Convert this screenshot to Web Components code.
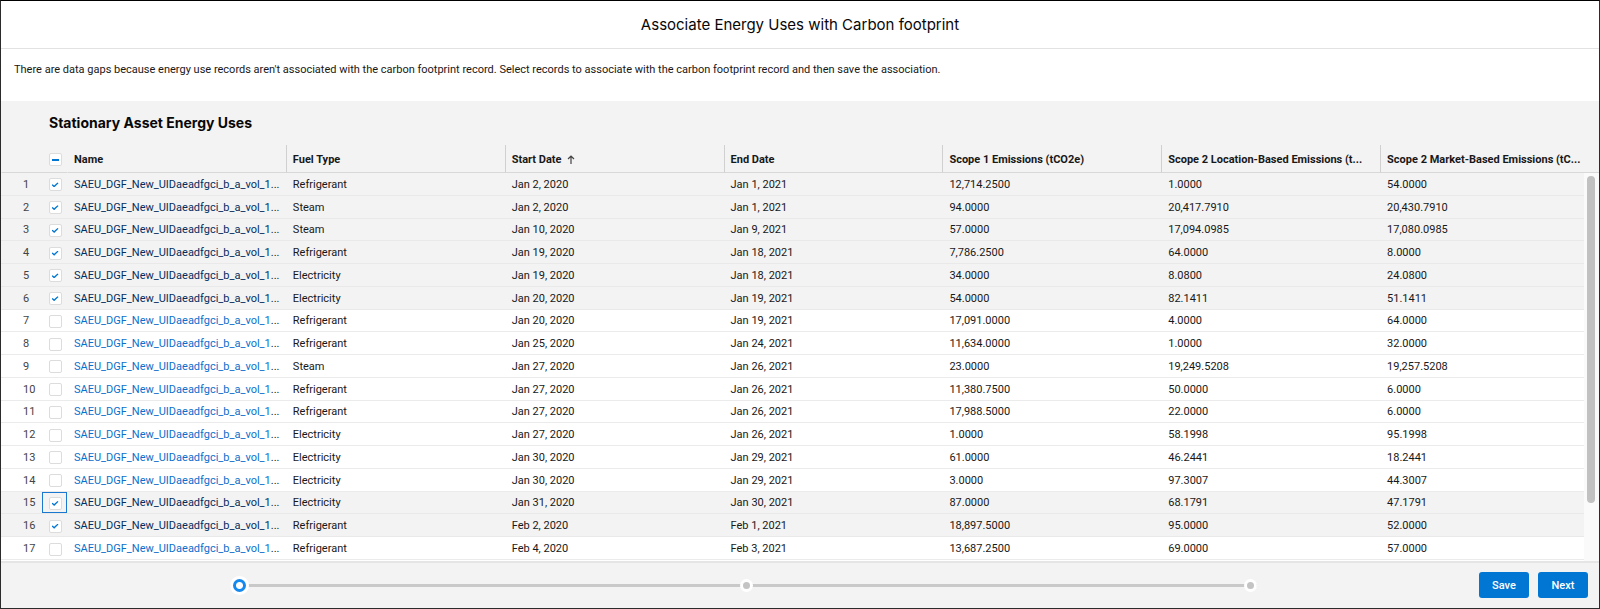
<!DOCTYPE html>
<html lang="en">
<head>
<meta charset="utf-8">
<title>Associate Energy Uses with Carbon footprint</title>
<style>
  html, body { margin: 0; height: 100%; }
  body { font-family: Roboto, "Liberation Sans", sans-serif; font-size: 11px; color: #181818; background: #fff; }
</style>
</head>
<body>
<flow-dialog>
  <span slot="title">Associate Energy Uses with Carbon footprint</span>
  <span slot="intro">There are data gaps because energy use records aren't associated with the carbon footprint record. Select records to associate with the carbon footprint record and then save the association.</span>
  <energy-table>Stationary Asset Energy Uses</energy-table>
  <step-progress slot="progress" steps="3" current="1"></step-progress>
  <brand-button slot="actions">Save</brand-button>
  <brand-button slot="actions">Next</brand-button>
</flow-dialog>

<template id="flow-dialog">
  <style>
    :host { display: flex; flex-direction: column; box-sizing: border-box; min-height: 100vh; border: 1px solid #2b2b2b; border-top-color: #000; }
    header { padding: 12px 16px; border-bottom: 1px solid #e2e2e2; text-align: center; }
    h1 { margin: 0; font-family: Inter, "Liberation Sans", sans-serif; font-size: 15px; line-height: 23px; font-weight: 400; color: #080707; }
    p { margin: 0; padding: 13px 13px 23px; line-height: 16px; }
    main { flex: 1; display: flex; flex-direction: column; }
    footer { display: grid; grid-template-columns: 31fr 139fr 30fr auto; align-items: center; padding: 9px 11px 10px 0; background: #f3f3f3; border-top: 2px solid #e5e5e5; }
    .progress { grid-column: 2; }
    .actions { grid-column: 4; display: flex; gap: 9px; }
  </style>
  <header><h1><slot name="title"></slot></h1></header>
  <p><slot name="intro"></slot></p>
  <main><slot></slot></main>
  <footer>
    <div class="progress"><slot name="progress"></slot></div>
    <div class="actions"><slot name="actions"></slot></div>
  </footer>
</template>

<template id="brand-button">
  <style>
    :host { display: block; }
    button { display: block; width: 50px; height: 26px; padding: 0; border: 0; border-radius: 3px; background: #0176d3; color: #fff; font: 500 11px Roboto, "Liberation Sans", sans-serif; cursor: pointer; }
  </style>
  <button type="button"><slot></slot></button>
</template>

<template id="step-progress">
  <style>
    :host { display: block; }
    ol { display: flex; align-items: center; justify-content: space-between; margin: 0; padding: 0; list-style: none; background: linear-gradient(#c9c9c9, #c9c9c9) center / 100% 3px no-repeat; }
    li { box-sizing: border-box; width: 13px; height: 13px; border: 3px solid #fff; border-radius: 50%; background: #c4c4c4; }
    li.current { width: 19px; height: 19px; background: radial-gradient(circle, #fff 3px, #1589ee 4px); }
  </style>
  <ol></ol>
</template>

<template id="energy-table">
  <style>
    :host { flex: 1; display: flex; flex-direction: column; background: #f3f3f3; }
    h2 { margin: 0; padding: 11px 48px; font-family: Inter, "Liberation Sans", sans-serif; font-size: 14px; line-height: 22px; font-weight: 700; color: #080707; }
    .pane { flex: 1; display: grid; grid-template: 28px 1fr / 1fr; padding-bottom: 1px; background: linear-gradient(#f3f3f3, #f3f3f3) top / 100% 28px no-repeat #fff; }
    table { grid-area: 1 / 1 / 3 / 2; width: 100%; height: 100%; table-layout: fixed; border-collapse: separate; border-spacing: 0; }
    th, td { box-sizing: border-box; height: 22px; padding: 2px 0 0 7px; text-align: left; font-weight: 400; white-space: nowrap; line-height: 16px; border-bottom: 1px solid #ebebeb; }
    thead th { height: 28px; padding-left: 6px; font-weight: 700; border-left: 1px solid #d0d0d0; border-bottom-color: #d8d8d8; }
    thead th:nth-child(-n+3) { border-left-color: transparent; }
    .num { width: 41px; }
    .pick { width: 25px; }
    tbody .num { padding: 2px 0 0 22px; color: #444; }
    .pick, thead .pick { padding: 2px 0 0 1px; text-align: center; border-left: 0; }
    .selected > * { background: #f3f3f3; border-bottom-color: #e9e9e9; }
    a { color: #0b6fcb; text-decoration: none; }
    .selected a { color: #032d60; }
    .focused .pick { box-shadow: inset 0 0 0 1px #1b78d0; }
    input { display: inline-grid; place-items: center; box-sizing: border-box; width: 13px; height: 13px; margin: 0; vertical-align: middle; appearance: none; background: #fff; border: 1px solid #dcdcdc; border-radius: 2px; }
    input:checked::before { content: ""; width: 7px; height: 5px; background: #0176d3; clip-path: polygon(0 52%, 14% 36%, 38% 62%, 86% 0, 100% 16%, 38% 100%); }
    input:indeterminate::before { content: ""; width: 7px; height: 2px; background: #0176d3; }
    svg { width: 8px; height: 9px; margin-left: 5px; vertical-align: -1px; fill: none; stroke: #444; stroke-width: 1.2; }
    .scroll { grid-area: 2 / 1; justify-self: end; z-index: 1; box-sizing: border-box; width: 15px; margin-bottom: -1px; padding: 3px 4px 0 3px; background: #fafafa; }
    .thumb { height: 85%; border-radius: 4px; background: #c1c1c1; }
  </style>
  <h2><slot></slot></h2>
  <div class="pane">
    <table>
      <thead>
        <tr>
          <th class="num" aria-label="Row number"></th>
          <th class="pick"><input type="checkbox" aria-label="Select all rows"></th>
          <th>Name</th>
          <th>Fuel Type</th>
          <th>Start Date<svg viewBox="0 0 8 9" aria-hidden="true"><path d="M4 9V1M1 4l3-3 3 3"/></svg></th>
          <th>End Date</th>
          <th>Scope 1 Emissions (tCO2e)</th>
          <th>Scope 2 Location-Based Emissions (t...</th>
          <th>Scope 2 Market-Based Emissions (tC...</th>
        </tr>
      </thead>
      <tbody></tbody>
    </table>
    <div class="scroll"><div class="thumb"></div></div>
  </div>
</template>

<script>
  class TemplateElement extends HTMLElement {
    constructor() {
      super();
      this.attachShadow({ mode: 'open' }).append(
        document.getElementById(this.localName).content.cloneNode(true));
    }
  }

  customElements.define('flow-dialog', class extends TemplateElement {});
  customElements.define('brand-button', class extends TemplateElement {});

  customElements.define('step-progress', class extends TemplateElement {
    connectedCallback() {
      const current = Number(this.getAttribute('current'));
      const items = Array.from({ length: Number(this.getAttribute('steps')) }, (_, i) => {
        const li = document.createElement('li');
        li.setAttribute('aria-label', `Step ${i + 1}`);
        if (i + 1 === current) li.className = 'current';
        return li;
      });
      this.shadowRoot.querySelector('ol').replaceChildren(...items);
    }
  });

  const NAME = 'SAEU_DGF_New_UIDaeadfgci_b_a_vol_1';
  // fuel, start, end, scope 1, scope 2 location-based, scope 2 market-based
  const ROWS = [
    ['Refrigerant', 'Jan 2, 2020', 'Jan 1, 2021', '12,714.2500', '1.0000', '54.0000'],
    ['Steam', 'Jan 2, 2020', 'Jan 1, 2021', '94.0000', '20,417.7910', '20,430.7910'],
    ['Steam', 'Jan 10, 2020', 'Jan 9, 2021', '57.0000', '17,094.0985', '17,080.0985'],
    ['Refrigerant', 'Jan 19, 2020', 'Jan 18, 2021', '7,786.2500', '64.0000', '8.0000'],
    ['Electricity', 'Jan 19, 2020', 'Jan 18, 2021', '34.0000', '8.0800', '24.0800'],
    ['Electricity', 'Jan 20, 2020', 'Jan 19, 2021', '54.0000', '82.1411', '51.1411'],
    ['Refrigerant', 'Jan 20, 2020', 'Jan 19, 2021', '17,091.0000', '4.0000', '64.0000'],
    ['Refrigerant', 'Jan 25, 2020', 'Jan 24, 2021', '11,634.0000', '1.0000', '32.0000'],
    ['Steam', 'Jan 27, 2020', 'Jan 26, 2021', '23.0000', '19,249.5208', '19,257.5208'],
    ['Refrigerant', 'Jan 27, 2020', 'Jan 26, 2021', '11,380.7500', '50.0000', '6.0000'],
    ['Refrigerant', 'Jan 27, 2020', 'Jan 26, 2021', '17,988.5000', '22.0000', '6.0000'],
    ['Electricity', 'Jan 27, 2020', 'Jan 26, 2021', '1.0000', '58.1998', '95.1998'],
    ['Electricity', 'Jan 30, 2020', 'Jan 29, 2021', '61.0000', '46.2441', '18.2441'],
    ['Electricity', 'Jan 30, 2020', 'Jan 29, 2021', '3.0000', '97.3007', '44.3007'],
    ['Electricity', 'Jan 31, 2020', 'Jan 30, 2021', '87.0000', '68.1791', '47.1791'],
    ['Refrigerant', 'Feb 2, 2020', 'Feb 1, 2021', '18,897.5000', '95.0000', '52.0000'],
    ['Refrigerant', 'Feb 4, 2020', 'Feb 3, 2021', '13,687.2500', '69.0000', '57.0000'],
  ];
  const SELECTED = new Set([1, 2, 3, 4, 5, 6, 15, 16]);
  const FOCUSED = 15;

  customElements.define('energy-table', class extends TemplateElement {
    connectedCallback() {
      const body = this.shadowRoot.querySelector('tbody');
      body.innerHTML = ROWS.map((cells, i) => {
        const n = i + 1;
        const on = SELECTED.has(n);
        return `<tr class="${on ? 'selected' : ''} ${n === FOCUSED ? 'focused' : ''}">
          <td class="num">${n}</td>
          <td class="pick"><input type="checkbox" aria-label="Select row ${n}" ${on ? 'checked' : ''}></td>
          <td><a href="#row-${n}">${NAME}</a>...</td>
          ${cells.map(c => `<td>${c}</td>`).join('')}</tr>`;
      }).join('');
      const all = this.shadowRoot.querySelector('thead input');
      const boxes = [...body.querySelectorAll('input')];
      const sync = () => {
        const count = boxes.filter(b => b.checked).length;
        all.checked = count === boxes.length;
        all.indeterminate = count > 0 && count < boxes.length;
      };
      body.addEventListener('change', e => {
        e.target.closest('tr').classList.toggle('selected', e.target.checked);
        sync();
      });
      sync();
    }
  });
</script>
</body>
</html>
